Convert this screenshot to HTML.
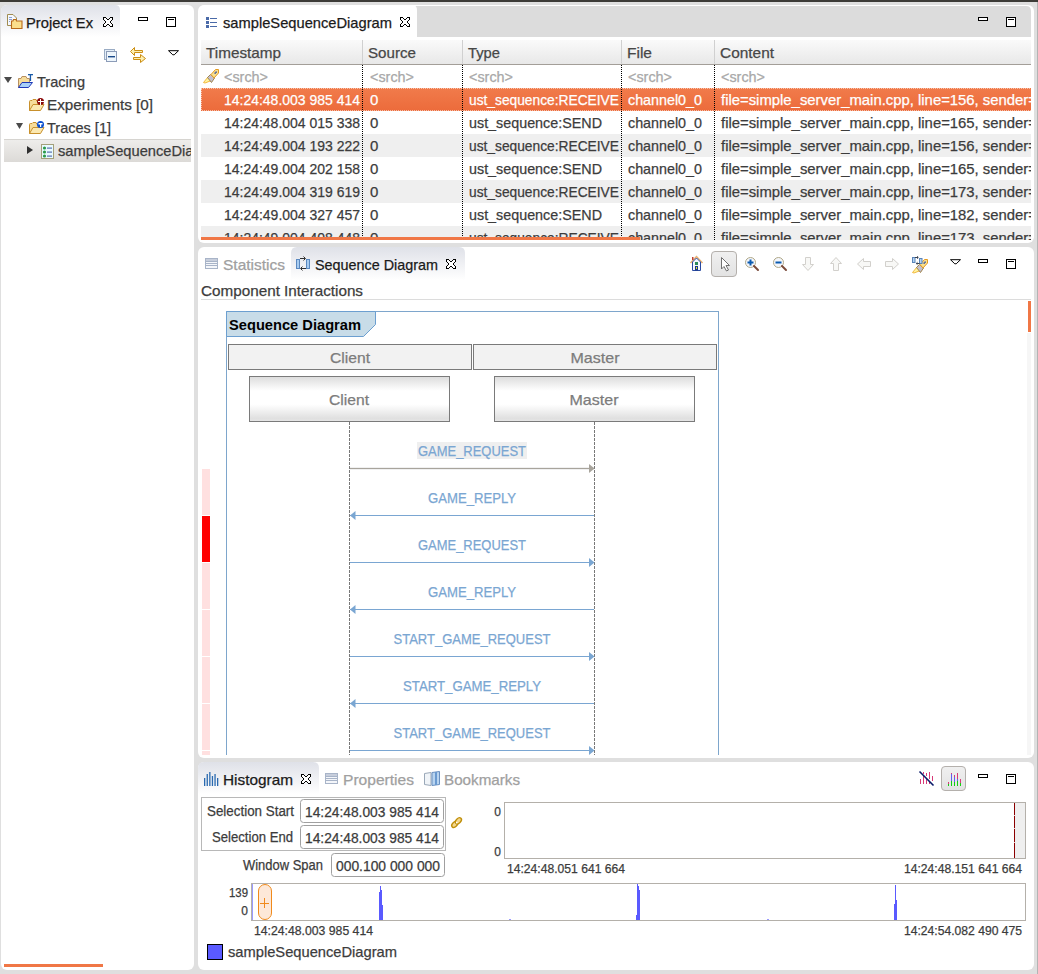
<!DOCTYPE html><html><head><meta charset="utf-8"><style>html,body{margin:0;padding:0;background:#dfdfdf;overflow:hidden}svg{display:block}</style></head><body><svg width="1038" height="974" viewBox="0 0 1038 974" style="font-family:'Liberation Sans',sans-serif"><defs><linearGradient id="tabg" x1="0" y1="0" x2="0" y2="1"><stop offset="0" stop-color="#dfe1e8"/><stop offset="1" stop-color="#ffffff"/></linearGradient><linearGradient id="hdrg" x1="0" y1="0" x2="0" y2="1"><stop offset="0" stop-color="#fafafa"/><stop offset="1" stop-color="#e8e8e8"/></linearGradient><linearGradient id="boxg" x1="0" y1="0" x2="0" y2="1"><stop offset="0" stop-color="#dcdcdc"/><stop offset="0.32" stop-color="#ffffff"/><stop offset="0.62" stop-color="#ffffff"/><stop offset="0.93" stop-color="#e0e0e0"/><stop offset="1" stop-color="#e6e6e6"/></linearGradient><linearGradient id="btng" x1="0" y1="0" x2="0" y2="1"><stop offset="0" stop-color="#f0f0f0"/><stop offset="1" stop-color="#e2e2e2"/></linearGradient><linearGradient id="orow" x1="0" y1="0" x2="0" y2="1"><stop offset="0" stop-color="#f17b4b"/><stop offset="1" stop-color="#ec6b3b"/></linearGradient><linearGradient id="selrow" x1="0" y1="0" x2="0" y2="1"><stop offset="0" stop-color="#efeeec"/><stop offset="1" stop-color="#dcdad7"/></linearGradient></defs><rect x="0" y="0" width="1038" height="974" fill="#dfdfdf" />
<rect x="0" y="0" width="1038" height="2" fill="#3c3b37" />
<rect x="1037" y="2" width="1" height="972" fill="#b4b4b4" />
<rect x="1" y="5" width="193" height="965" rx="6" ry="6" fill="#ffffff"/>
<rect x="198" y="5" width="836" height="238" rx="6" ry="6" fill="#ffffff"/>
<rect x="198" y="247" width="836" height="511" rx="6" ry="6" fill="#ffffff"/>
<rect x="198" y="762" width="836" height="208" rx="6" ry="6" fill="#ffffff"/>
<path d="M1,37 L1,11 Q1,5 7,5 L115,5 Q120,5 120,10 L120,37 Z" fill="url(#tabg)"/>
<text x="26" y="28" font-size="15" fill="#1a1a1a" font-family="Liberation Sans" textLength="67" lengthAdjust="spacingAndGlyphs" stroke="#1a1a1a" stroke-width="0.25" >Project Ex</text>
<text x="37" y="87" font-size="15" fill="#3c3c3c" font-family="Liberation Sans" textLength="48" lengthAdjust="spacingAndGlyphs" stroke="#3c3c3c" stroke-width="0.25" >Tracing</text>
<text x="47" y="110" font-size="15" fill="#3c3c3c" font-family="Liberation Sans" textLength="106" lengthAdjust="spacingAndGlyphs" stroke="#3c3c3c" stroke-width="0.25" >Experiments [0]</text>
<text x="47" y="133" font-size="15" fill="#3c3c3c" font-family="Liberation Sans" textLength="64" lengthAdjust="spacingAndGlyphs" stroke="#3c3c3c" stroke-width="0.25" >Traces [1]</text>
<rect x="4" y="139" width="187" height="23" fill="url(#selrow)"/>
<rect x="4" y="139" width="187" height="1" fill="#d6d4d0" />
<svg x="0" y="0" width="191" height="974" overflow="hidden">
<text x="58" y="156" font-size="15" fill="#3c3c3c" font-family="Liberation Sans" textLength="169" lengthAdjust="spacingAndGlyphs" stroke="#3c3c3c" stroke-width="0.25" >sampleSequenceDiagram</text>
</svg>
<rect x="4" y="964" width="99" height="3" fill="#f07746" />
<path d="M411,37 L411,6 L1026,6 Q1031,6 1031,11 L1031,37 Z" fill="#dcdcdc"/>
<path d="M199,37 L199,11 Q199,5 205,5 L412,5 Q417,5 417,10 L417,37 Z" fill="#ffffff"/>
<text x="223" y="28" font-size="15" fill="#1a1a1a" font-family="Liberation Sans" textLength="169" lengthAdjust="spacingAndGlyphs" stroke="#1a1a1a" stroke-width="0.25" >sampleSequenceDiagram</text>
<rect x="201" y="40" width="830" height="24" fill="url(#hdrg)"/>
<rect x="201" y="64" width="830" height="1" fill="#a39e98" />
<rect x="362" y="40" width="1" height="24" fill="#d0d0d0" />
<rect x="462" y="40" width="1" height="24" fill="#d0d0d0" />
<rect x="621" y="40" width="1" height="24" fill="#d0d0d0" />
<rect x="714" y="40" width="1" height="24" fill="#d0d0d0" />
<text x="206" y="58" font-size="15" fill="#474747" font-family="Liberation Sans" textLength="75" lengthAdjust="spacingAndGlyphs" stroke="#474747" stroke-width="0.25" >Timestamp</text>
<text x="368" y="58" font-size="15" fill="#474747" font-family="Liberation Sans" textLength="48" lengthAdjust="spacingAndGlyphs" stroke="#474747" stroke-width="0.25" >Source</text>
<text x="468" y="58" font-size="15" fill="#474747" font-family="Liberation Sans" textLength="32" lengthAdjust="spacingAndGlyphs" stroke="#474747" stroke-width="0.25" >Type</text>
<text x="627" y="58" font-size="15" fill="#474747" font-family="Liberation Sans" textLength="25" lengthAdjust="spacingAndGlyphs" stroke="#474747" stroke-width="0.25" >File</text>
<text x="720" y="58" font-size="15" fill="#474747" font-family="Liberation Sans" textLength="54" lengthAdjust="spacingAndGlyphs" stroke="#474747" stroke-width="0.25" >Content</text>
<text x="224" y="82" font-size="15" fill="#a8a8a8" font-family="Liberation Sans" textLength="44" lengthAdjust="spacingAndGlyphs" stroke="#a8a8a8" stroke-width="0.25" >&lt;srch&gt;</text>
<text x="370" y="82" font-size="15" fill="#a8a8a8" font-family="Liberation Sans" textLength="44" lengthAdjust="spacingAndGlyphs" stroke="#a8a8a8" stroke-width="0.25" >&lt;srch&gt;</text>
<text x="469" y="82" font-size="15" fill="#a8a8a8" font-family="Liberation Sans" textLength="44" lengthAdjust="spacingAndGlyphs" stroke="#a8a8a8" stroke-width="0.25" >&lt;srch&gt;</text>
<text x="628" y="82" font-size="15" fill="#a8a8a8" font-family="Liberation Sans" textLength="44" lengthAdjust="spacingAndGlyphs" stroke="#a8a8a8" stroke-width="0.25" >&lt;srch&gt;</text>
<text x="721" y="82" font-size="15" fill="#a8a8a8" font-family="Liberation Sans" textLength="44" lengthAdjust="spacingAndGlyphs" stroke="#a8a8a8" stroke-width="0.25" >&lt;srch&gt;</text>
<svg x="0" y="0" width="1031" height="240" overflow="hidden">
<rect x="201" y="88" width="830" height="23" fill="url(#orow)"/>
<line x1="201" y1="88.5" x2="1031" y2="88.5" stroke="#ffffff" stroke-opacity="0.55" stroke-dasharray="1,1"/>
<line x1="202" y1="110.5" x2="1031" y2="110.5" stroke="#ffffff" stroke-opacity="0.55" stroke-dasharray="1,1"/>
<line x1="201.5" y1="89" x2="201.5" y2="111" stroke="#ffffff" stroke-opacity="0.55" stroke-dasharray="1,1"/>
<text x="224" y="105" font-size="15" fill="#ffffff" font-family="Liberation Sans" textLength="136" lengthAdjust="spacingAndGlyphs" stroke="#ffffff" stroke-width="0.25" >14:24:48.003 985 414</text>
<text x="370" y="105" font-size="15" fill="#ffffff" font-family="Liberation Sans" stroke="#ffffff" stroke-width="0.25" >0</text>
<svg x="0" y="0" width="620" height="974" overflow="hidden">
<text x="469" y="105" font-size="15" fill="#ffffff" font-family="Liberation Sans" textLength="150" lengthAdjust="spacingAndGlyphs" stroke="#ffffff" stroke-width="0.25" >ust_sequence:RECEIVE</text>
</svg>
<text x="628" y="105" font-size="15" fill="#ffffff" font-family="Liberation Sans" textLength="74" lengthAdjust="spacingAndGlyphs" stroke="#ffffff" stroke-width="0.25" >channel0_0</text>
<text x="721" y="105" font-size="15" fill="#ffffff" font-family="Liberation Sans" textLength="316" lengthAdjust="spacingAndGlyphs" stroke="#ffffff" stroke-width="0.25" >file=simple_server_main.cpp, line=156, sender=</text>
<text x="224" y="128" font-size="15" fill="#3c3c3c" font-family="Liberation Sans" textLength="136" lengthAdjust="spacingAndGlyphs" stroke="#3c3c3c" stroke-width="0.25" >14:24:48.004 015 338</text>
<text x="370" y="128" font-size="15" fill="#3c3c3c" font-family="Liberation Sans" stroke="#3c3c3c" stroke-width="0.25" >0</text>
<svg x="0" y="0" width="620" height="974" overflow="hidden">
<text x="469" y="128" font-size="15" fill="#3c3c3c" font-family="Liberation Sans" textLength="133" lengthAdjust="spacingAndGlyphs" stroke="#3c3c3c" stroke-width="0.25" >ust_sequence:SEND</text>
</svg>
<text x="628" y="128" font-size="15" fill="#3c3c3c" font-family="Liberation Sans" textLength="74" lengthAdjust="spacingAndGlyphs" stroke="#3c3c3c" stroke-width="0.25" >channel0_0</text>
<text x="721" y="128" font-size="15" fill="#3c3c3c" font-family="Liberation Sans" textLength="316" lengthAdjust="spacingAndGlyphs" stroke="#3c3c3c" stroke-width="0.25" >file=simple_server_main.cpp, line=165, sender=</text>
<rect x="201" y="134" width="830" height="23" fill="#efefef" />
<text x="224" y="151" font-size="15" fill="#3c3c3c" font-family="Liberation Sans" textLength="136" lengthAdjust="spacingAndGlyphs" stroke="#3c3c3c" stroke-width="0.25" >14:24:49.004 193 222</text>
<text x="370" y="151" font-size="15" fill="#3c3c3c" font-family="Liberation Sans" stroke="#3c3c3c" stroke-width="0.25" >0</text>
<svg x="0" y="0" width="620" height="974" overflow="hidden">
<text x="469" y="151" font-size="15" fill="#3c3c3c" font-family="Liberation Sans" textLength="150" lengthAdjust="spacingAndGlyphs" stroke="#3c3c3c" stroke-width="0.25" >ust_sequence:RECEIVE</text>
</svg>
<text x="628" y="151" font-size="15" fill="#3c3c3c" font-family="Liberation Sans" textLength="74" lengthAdjust="spacingAndGlyphs" stroke="#3c3c3c" stroke-width="0.25" >channel0_0</text>
<text x="721" y="151" font-size="15" fill="#3c3c3c" font-family="Liberation Sans" textLength="316" lengthAdjust="spacingAndGlyphs" stroke="#3c3c3c" stroke-width="0.25" >file=simple_server_main.cpp, line=156, sender=</text>
<text x="224" y="174" font-size="15" fill="#3c3c3c" font-family="Liberation Sans" textLength="136" lengthAdjust="spacingAndGlyphs" stroke="#3c3c3c" stroke-width="0.25" >14:24:49.004 202 158</text>
<text x="370" y="174" font-size="15" fill="#3c3c3c" font-family="Liberation Sans" stroke="#3c3c3c" stroke-width="0.25" >0</text>
<svg x="0" y="0" width="620" height="974" overflow="hidden">
<text x="469" y="174" font-size="15" fill="#3c3c3c" font-family="Liberation Sans" textLength="133" lengthAdjust="spacingAndGlyphs" stroke="#3c3c3c" stroke-width="0.25" >ust_sequence:SEND</text>
</svg>
<text x="628" y="174" font-size="15" fill="#3c3c3c" font-family="Liberation Sans" textLength="74" lengthAdjust="spacingAndGlyphs" stroke="#3c3c3c" stroke-width="0.25" >channel0_0</text>
<text x="721" y="174" font-size="15" fill="#3c3c3c" font-family="Liberation Sans" textLength="316" lengthAdjust="spacingAndGlyphs" stroke="#3c3c3c" stroke-width="0.25" >file=simple_server_main.cpp, line=165, sender=</text>
<rect x="201" y="180" width="830" height="23" fill="#efefef" />
<text x="224" y="197" font-size="15" fill="#3c3c3c" font-family="Liberation Sans" textLength="136" lengthAdjust="spacingAndGlyphs" stroke="#3c3c3c" stroke-width="0.25" >14:24:49.004 319 619</text>
<text x="370" y="197" font-size="15" fill="#3c3c3c" font-family="Liberation Sans" stroke="#3c3c3c" stroke-width="0.25" >0</text>
<svg x="0" y="0" width="620" height="974" overflow="hidden">
<text x="469" y="197" font-size="15" fill="#3c3c3c" font-family="Liberation Sans" textLength="150" lengthAdjust="spacingAndGlyphs" stroke="#3c3c3c" stroke-width="0.25" >ust_sequence:RECEIVE</text>
</svg>
<text x="628" y="197" font-size="15" fill="#3c3c3c" font-family="Liberation Sans" textLength="74" lengthAdjust="spacingAndGlyphs" stroke="#3c3c3c" stroke-width="0.25" >channel0_0</text>
<text x="721" y="197" font-size="15" fill="#3c3c3c" font-family="Liberation Sans" textLength="316" lengthAdjust="spacingAndGlyphs" stroke="#3c3c3c" stroke-width="0.25" >file=simple_server_main.cpp, line=173, sender=</text>
<text x="224" y="220" font-size="15" fill="#3c3c3c" font-family="Liberation Sans" textLength="136" lengthAdjust="spacingAndGlyphs" stroke="#3c3c3c" stroke-width="0.25" >14:24:49.004 327 457</text>
<text x="370" y="220" font-size="15" fill="#3c3c3c" font-family="Liberation Sans" stroke="#3c3c3c" stroke-width="0.25" >0</text>
<svg x="0" y="0" width="620" height="974" overflow="hidden">
<text x="469" y="220" font-size="15" fill="#3c3c3c" font-family="Liberation Sans" textLength="133" lengthAdjust="spacingAndGlyphs" stroke="#3c3c3c" stroke-width="0.25" >ust_sequence:SEND</text>
</svg>
<text x="628" y="220" font-size="15" fill="#3c3c3c" font-family="Liberation Sans" textLength="74" lengthAdjust="spacingAndGlyphs" stroke="#3c3c3c" stroke-width="0.25" >channel0_0</text>
<text x="721" y="220" font-size="15" fill="#3c3c3c" font-family="Liberation Sans" textLength="316" lengthAdjust="spacingAndGlyphs" stroke="#3c3c3c" stroke-width="0.25" >file=simple_server_main.cpp, line=182, sender=</text>
<rect x="201" y="226" width="830" height="23" fill="#efefef" />
<text x="224" y="243" font-size="15" fill="#3c3c3c" font-family="Liberation Sans" textLength="136" lengthAdjust="spacingAndGlyphs" stroke="#3c3c3c" stroke-width="0.25" >14:24:49.004 408 448</text>
<text x="370" y="243" font-size="15" fill="#3c3c3c" font-family="Liberation Sans" stroke="#3c3c3c" stroke-width="0.25" >0</text>
<svg x="0" y="0" width="620" height="974" overflow="hidden">
<text x="469" y="243" font-size="15" fill="#3c3c3c" font-family="Liberation Sans" textLength="150" lengthAdjust="spacingAndGlyphs" stroke="#3c3c3c" stroke-width="0.25" >ust_sequence:RECEIVE</text>
</svg>
<text x="628" y="243" font-size="15" fill="#3c3c3c" font-family="Liberation Sans" textLength="74" lengthAdjust="spacingAndGlyphs" stroke="#3c3c3c" stroke-width="0.25" >channel0_0</text>
<text x="721" y="243" font-size="15" fill="#3c3c3c" font-family="Liberation Sans" textLength="316" lengthAdjust="spacingAndGlyphs" stroke="#3c3c3c" stroke-width="0.25" >file=simple_server_main.cpp, line=173, sender=</text>
</svg>
<line x1="362.5" y1="65" x2="362.5" y2="240" stroke="#000" stroke-width="1" stroke-dasharray="1,1"/>
<line x1="462.5" y1="65" x2="462.5" y2="240" stroke="#000" stroke-width="1" stroke-dasharray="1,1"/>
<line x1="621.5" y1="65" x2="621.5" y2="240" stroke="#000" stroke-width="1" stroke-dasharray="1,1"/>
<line x1="714.5" y1="65" x2="714.5" y2="240" stroke="#000" stroke-width="1" stroke-dasharray="1,1"/>
<rect x="201" y="237" width="439" height="3" fill="#f07746" />
<path d="M291,280 L291,253 Q291,247 297,247 L459,247 Q465,247 465,253 L465,280 Z" fill="url(#tabg)"/>
<text x="223" y="270" font-size="15" fill="#a0a0a0" font-family="Liberation Sans" textLength="62" lengthAdjust="spacingAndGlyphs" stroke="#a0a0a0" stroke-width="0.25" >Statistics</text>
<text x="315" y="270" font-size="15" fill="#1a1a1a" font-family="Liberation Sans" textLength="123" lengthAdjust="spacingAndGlyphs" stroke="#1a1a1a" stroke-width="0.25" >Sequence Diagram</text>
<text x="201" y="296" font-size="15" fill="#3c3c3c" font-family="Liberation Sans" textLength="162" lengthAdjust="spacingAndGlyphs" stroke="#3c3c3c" stroke-width="0.25" >Component Interactions</text>
<rect x="201" y="299" width="830" height="1" fill="#dcdcdc" />
<rect x="202" y="469" width="8" height="46" fill="#ffe0e0" />
<rect x="202" y="516" width="8" height="46" fill="#ff0000" />
<rect x="202" y="563" width="8" height="46" fill="#ffe0e0" />
<rect x="202" y="610" width="8" height="46" fill="#ffe0e0" />
<rect x="202" y="657" width="8" height="46" fill="#ffe0e0" />
<rect x="202" y="704" width="8" height="46" fill="#ffe0e0" />
<rect x="202" y="751" width="8" height="4" fill="#ffe0e0" />
<rect x="226" y="311" width="1" height="444" fill="#7ea6cc" />
<rect x="718" y="311" width="1" height="444" fill="#7ea6cc" />
<rect x="226" y="311" width="493" height="1" fill="#7ea6cc" />
<path d="M226.5,311.5 L375.5,311.5 L375.5,324.5 L363.5,336.5 L226.5,336.5 Z" fill="#c8dce8" stroke="#6c9fd0" stroke-width="1"/>
<text x="229" y="330" font-size="14" fill="#000000" font-family="Liberation Sans" textLength="132" lengthAdjust="spacingAndGlyphs" font-weight="bold" >Sequence Diagram</text>
<rect x="228.5" y="344.5" width="243" height="25" fill="#f2f2f2" stroke="#7a7a7a" stroke-width="1" rx="0" />
<rect x="473.5" y="344.5" width="243" height="25" fill="#f2f2f2" stroke="#7a7a7a" stroke-width="1" rx="0" />
<text x="350" y="363" font-size="15" fill="#7c7c7c" font-family="Liberation Sans" textLength="40" lengthAdjust="spacingAndGlyphs" text-anchor="middle" stroke="#7c7c7c" stroke-width="0.25" >Client</text>
<text x="595" y="363" font-size="15" fill="#7c7c7c" font-family="Liberation Sans" textLength="49" lengthAdjust="spacingAndGlyphs" text-anchor="middle" stroke="#7c7c7c" stroke-width="0.25" >Master</text>
<rect x="249.5" y="376.5" width="200" height="45" fill="url(#boxg)" stroke="#7a7a7a"/>
<rect x="494.5" y="376.5" width="200" height="45" fill="url(#boxg)" stroke="#7a7a7a"/>
<text x="349" y="405" font-size="15" fill="#7c7c7c" font-family="Liberation Sans" textLength="40" lengthAdjust="spacingAndGlyphs" text-anchor="middle" stroke="#7c7c7c" stroke-width="0.25" >Client</text>
<text x="594" y="405" font-size="15" fill="#7c7c7c" font-family="Liberation Sans" textLength="49" lengthAdjust="spacingAndGlyphs" text-anchor="middle" stroke="#7c7c7c" stroke-width="0.25" >Master</text>
<line x1="349.5" y1="422" x2="349.5" y2="755" stroke="#787878" stroke-dasharray="3,1"/>
<line x1="594.5" y1="422" x2="594.5" y2="755" stroke="#787878" stroke-dasharray="3,1"/>
<svg x="0" y="0" width="1038" height="755" overflow="hidden">
<rect x="417" y="442" width="110" height="17" fill="#efefef" />
<rect x="350" y="467" width="244" height="3" fill="#f0f0f0" />
<text x="472" y="456" font-size="15" fill="#7aa6d2" font-family="Liberation Sans" textLength="108" lengthAdjust="spacingAndGlyphs" text-anchor="middle" stroke="#7aa6d2" stroke-width="0.25" >GAME_REQUEST</text>
<rect x="350" y="468" width="244" height="1" fill="#a8a49c" />
<path d="M589,464 L594.5,468.5 L589,473 Z" fill="#a8a49c"/>
<text x="472" y="503" font-size="15" fill="#7aa6d2" font-family="Liberation Sans" textLength="88" lengthAdjust="spacingAndGlyphs" text-anchor="middle" stroke="#7aa6d2" stroke-width="0.25" >GAME_REPLY</text>
<rect x="350" y="515" width="244" height="1" fill="#7aa6d2" />
<path d="M355.5,511 L350,515.5 L355.5,520 Z" fill="#7aa6d2"/>
<text x="472" y="550" font-size="15" fill="#7aa6d2" font-family="Liberation Sans" textLength="108" lengthAdjust="spacingAndGlyphs" text-anchor="middle" stroke="#7aa6d2" stroke-width="0.25" >GAME_REQUEST</text>
<rect x="350" y="562" width="244" height="1" fill="#7aa6d2" />
<path d="M589,558 L594.5,562.5 L589,567 Z" fill="#7aa6d2"/>
<text x="472" y="597" font-size="15" fill="#7aa6d2" font-family="Liberation Sans" textLength="88" lengthAdjust="spacingAndGlyphs" text-anchor="middle" stroke="#7aa6d2" stroke-width="0.25" >GAME_REPLY</text>
<rect x="350" y="609" width="244" height="1" fill="#7aa6d2" />
<path d="M355.5,605 L350,609.5 L355.5,614 Z" fill="#7aa6d2"/>
<text x="472" y="644" font-size="15" fill="#7aa6d2" font-family="Liberation Sans" textLength="157" lengthAdjust="spacingAndGlyphs" text-anchor="middle" stroke="#7aa6d2" stroke-width="0.25" >START_GAME_REQUEST</text>
<rect x="350" y="656" width="244" height="1" fill="#7aa6d2" />
<path d="M589,652 L594.5,656.5 L589,661 Z" fill="#7aa6d2"/>
<text x="472" y="691" font-size="15" fill="#7aa6d2" font-family="Liberation Sans" textLength="138" lengthAdjust="spacingAndGlyphs" text-anchor="middle" stroke="#7aa6d2" stroke-width="0.25" >START_GAME_REPLY</text>
<rect x="350" y="703" width="244" height="1" fill="#7aa6d2" />
<path d="M355.5,699 L350,703.5 L355.5,708 Z" fill="#7aa6d2"/>
<text x="472" y="738" font-size="15" fill="#7aa6d2" font-family="Liberation Sans" textLength="157" lengthAdjust="spacingAndGlyphs" text-anchor="middle" stroke="#7aa6d2" stroke-width="0.25" >START_GAME_REQUEST</text>
<rect x="350" y="750" width="244" height="1" fill="#7aa6d2" />
<path d="M589,746 L594.5,750.5 L589,755 Z" fill="#7aa6d2"/>
</svg>
<rect x="1027" y="333" width="4" height="422" fill="#f6f6f6" />
<rect x="1028" y="301" width="3" height="31" fill="#f07746" />
<path d="M198,794 L198,768 Q198,762 204,762 L313,762 Q319,762 319,768 L319,794 Z" fill="url(#tabg)"/>
<text x="223" y="785" font-size="15" fill="#1a1a1a" font-family="Liberation Sans" textLength="70" lengthAdjust="spacingAndGlyphs" stroke="#1a1a1a" stroke-width="0.25" >Histogram</text>
<text x="343" y="785" font-size="15" fill="#a0a0a0" font-family="Liberation Sans" textLength="71" lengthAdjust="spacingAndGlyphs" stroke="#a0a0a0" stroke-width="0.25" >Properties</text>
<text x="444" y="785" font-size="15" fill="#a0a0a0" font-family="Liberation Sans" textLength="76" lengthAdjust="spacingAndGlyphs" stroke="#a0a0a0" stroke-width="0.25" >Bookmarks</text>
<rect x="201.5" y="797.5" width="244" height="53" fill="none" stroke="#b8b8b8" stroke-width="1" rx="0" />
<text x="207" y="816" font-size="14" fill="#3c3c3c" font-family="Liberation Sans" textLength="87" lengthAdjust="spacingAndGlyphs" stroke="#3c3c3c" stroke-width="0.25" >Selection Start</text>
<text x="212" y="842" font-size="14" fill="#3c3c3c" font-family="Liberation Sans" textLength="81" lengthAdjust="spacingAndGlyphs" stroke="#3c3c3c" stroke-width="0.25" >Selection End</text>
<text x="243" y="870" font-size="14" fill="#3c3c3c" font-family="Liberation Sans" textLength="80" lengthAdjust="spacingAndGlyphs" stroke="#3c3c3c" stroke-width="0.25" >Window Span</text>
<rect x="300.5" y="799.5" width="143" height="23" fill="#ffffff" stroke="#a0a0a0" stroke-width="1" rx="3" />
<rect x="300.5" y="825.5" width="143" height="23" fill="#ffffff" stroke="#a0a0a0" stroke-width="1" rx="3" />
<rect x="331.5" y="853.5" width="113" height="23" fill="#ffffff" stroke="#a0a0a0" stroke-width="1" rx="3" />
<text x="305" y="817" font-size="14" fill="#3c3c3c" font-family="Liberation Sans" textLength="134" lengthAdjust="spacingAndGlyphs" stroke="#3c3c3c" stroke-width="0.25" >14:24:48.003 985 414</text>
<text x="305" y="843" font-size="14" fill="#3c3c3c" font-family="Liberation Sans" textLength="134" lengthAdjust="spacingAndGlyphs" stroke="#3c3c3c" stroke-width="0.25" >14:24:48.003 985 414</text>
<text x="336" y="871" font-size="14" fill="#3c3c3c" font-family="Liberation Sans" textLength="104" lengthAdjust="spacingAndGlyphs" stroke="#3c3c3c" stroke-width="0.25" >000.100 000 000</text>
<rect x="504.5" y="802.5" width="521" height="56" fill="#ffffff" stroke="#b4b0aa" stroke-width="1" rx="0" />
<rect x="1015" y="803" width="10" height="55" fill="#efefef" />
<rect x="1014" y="803" width="1" height="55" fill="#8b0000" />
<rect x="1014" y="815" width="1" height="1" fill="#e8c8c8" />
<rect x="1014" y="828" width="1" height="1" fill="#e8c8c8" />
<rect x="1014" y="842" width="1" height="1" fill="#e8c8c8" />
<text x="501" y="816" font-size="12" fill="#3c3c3c" font-family="Liberation Sans" text-anchor="end" stroke="#3c3c3c" stroke-width="0.25" >0</text>
<text x="501" y="856" font-size="12" fill="#3c3c3c" font-family="Liberation Sans" text-anchor="end" stroke="#3c3c3c" stroke-width="0.25" >0</text>
<text x="507" y="873" font-size="12" fill="#3c3c3c" font-family="Liberation Sans" textLength="118" lengthAdjust="spacingAndGlyphs" stroke="#3c3c3c" stroke-width="0.25" >14:24:48.051 641 664</text>
<text x="904" y="873" font-size="12" fill="#3c3c3c" font-family="Liberation Sans" textLength="118" lengthAdjust="spacingAndGlyphs" stroke="#3c3c3c" stroke-width="0.25" >14:24:48.151 641 664</text>
<rect x="251.5" y="883.5" width="774" height="37" fill="#ffffff" stroke="#b4b0aa" stroke-width="1" rx="0" />
<rect x="252" y="884" width="1" height="36" fill="#9a9aff" />
<text x="248" y="897" font-size="12" fill="#3c3c3c" font-family="Liberation Sans" textLength="19" lengthAdjust="spacingAndGlyphs" text-anchor="end" stroke="#3c3c3c" stroke-width="0.25" >139</text>
<text x="248" y="915" font-size="12" fill="#3c3c3c" font-family="Liberation Sans" text-anchor="end" stroke="#3c3c3c" stroke-width="0.25" >0</text>
<rect x="258.5" y="884.5" width="13" height="35" rx="6.5" ry="6.5" fill="#fde8d8" stroke="#f08a1c"/>
<rect x="260" y="903" width="9" height="1" fill="#f08a1c" />
<rect x="264" y="898" width="1" height="10" fill="#f08a1c" />
<rect x="379" y="892" width="1" height="28" fill="#5a5aff" />
<rect x="380" y="886" width="1" height="34" fill="#5a5aff" />
<rect x="381" y="890" width="1" height="30" fill="#5a5aff" />
<rect x="382" y="905" width="1" height="15" fill="#5a5aff" />
<rect x="636" y="915" width="1" height="5" fill="#5a5aff" />
<rect x="637" y="884" width="1" height="36" fill="#5a5aff" />
<rect x="638" y="886" width="1" height="34" fill="#5a5aff" />
<rect x="639" y="890" width="1" height="30" fill="#5a5aff" />
<rect x="894" y="904" width="1" height="16" fill="#5a5aff" />
<rect x="895" y="885" width="1" height="35" fill="#5a5aff" />
<rect x="896" y="900" width="1" height="20" fill="#5a5aff" />
<rect x="509" y="919" width="2" height="1" fill="#9a9aff" />
<rect x="767" y="919" width="2" height="1" fill="#9a9aff" />
<text x="254" y="935" font-size="12" fill="#3c3c3c" font-family="Liberation Sans" textLength="119" lengthAdjust="spacingAndGlyphs" stroke="#3c3c3c" stroke-width="0.25" >14:24:48.003 985 414</text>
<text x="904" y="935" font-size="12" fill="#3c3c3c" font-family="Liberation Sans" textLength="118" lengthAdjust="spacingAndGlyphs" stroke="#3c3c3c" stroke-width="0.25" >14:24:54.082 490 475</text>
<rect x="207.5" y="944.5" width="15" height="15" fill="#5a5aff" stroke="#000000" stroke-width="1" rx="0" />
<text x="228" y="957" font-size="15" fill="#3c3c3c" font-family="Liberation Sans" textLength="169" lengthAdjust="spacingAndGlyphs" stroke="#3c3c3c" stroke-width="0.25" >sampleSequenceDiagram</text>
<path d="M7.5,14.5 L13,14.5 L16.5,18 L16.5,25.5 L7.5,25.5 Z" fill="#f4f8ff" stroke="#a08c50"/>
<rect x="9" y="17" width="3" height="1" fill="#8ca0d0"/><rect x="9" y="19" width="3" height="1" fill="#8ca0d0"/><rect x="9" y="21" width="1" height="1" fill="#8ca0d0"/>
<path d="M11.5,28.5 L11.5,21 L13,21 L13.5,19.5 L16,19.5 L16.5,21 L22,21 L22,28.5 Z" fill="#fbdf8c" stroke="#b86a1a" stroke-width="1.1"/>
<rect x="103" y="17" width="3" height="1" fill="#000000"/>
<rect x="110" y="17" width="3" height="1" fill="#000000"/>
<rect x="103" y="18" width="1" height="1" fill="#000000"/>
<rect x="104" y="18" width="2" height="1" fill="#ffffff"/>
<rect x="106" y="18" width="1" height="1" fill="#000000"/>
<rect x="109" y="18" width="1" height="1" fill="#000000"/>
<rect x="110" y="18" width="2" height="1" fill="#ffffff"/>
<rect x="112" y="18" width="1" height="1" fill="#000000"/>
<rect x="103" y="19" width="1" height="1" fill="#000000"/>
<rect x="104" y="19" width="3" height="1" fill="#ffffff"/>
<rect x="107" y="19" width="2" height="1" fill="#000000"/>
<rect x="109" y="19" width="3" height="1" fill="#ffffff"/>
<rect x="112" y="19" width="1" height="1" fill="#000000"/>
<rect x="104" y="20" width="1" height="1" fill="#000000"/>
<rect x="105" y="20" width="6" height="1" fill="#ffffff"/>
<rect x="111" y="20" width="1" height="1" fill="#000000"/>
<rect x="105" y="21" width="1" height="1" fill="#000000"/>
<rect x="106" y="21" width="4" height="1" fill="#ffffff"/>
<rect x="110" y="21" width="1" height="1" fill="#000000"/>
<rect x="105" y="22" width="1" height="1" fill="#000000"/>
<rect x="106" y="22" width="4" height="1" fill="#ffffff"/>
<rect x="110" y="22" width="1" height="1" fill="#000000"/>
<rect x="104" y="23" width="1" height="1" fill="#000000"/>
<rect x="105" y="23" width="6" height="1" fill="#ffffff"/>
<rect x="111" y="23" width="1" height="1" fill="#000000"/>
<rect x="103" y="24" width="1" height="1" fill="#000000"/>
<rect x="104" y="24" width="3" height="1" fill="#ffffff"/>
<rect x="107" y="24" width="2" height="1" fill="#000000"/>
<rect x="109" y="24" width="3" height="1" fill="#ffffff"/>
<rect x="112" y="24" width="1" height="1" fill="#000000"/>
<rect x="103" y="25" width="1" height="1" fill="#000000"/>
<rect x="104" y="25" width="2" height="1" fill="#ffffff"/>
<rect x="106" y="25" width="1" height="1" fill="#000000"/>
<rect x="109" y="25" width="1" height="1" fill="#000000"/>
<rect x="110" y="25" width="2" height="1" fill="#ffffff"/>
<rect x="112" y="25" width="1" height="1" fill="#000000"/>
<rect x="103" y="26" width="3" height="1" fill="#000000"/>
<rect x="110" y="26" width="3" height="1" fill="#000000"/>
<rect x="138.5" y="17.5" width="9" height="3" fill="#fff" stroke="#000" stroke-width="1"/>
<rect x="166.5" y="17.5" width="9" height="9" fill="#fff" stroke="#000" stroke-width="1"/>
<rect x="168" y="19" width="6" height="1" fill="#000"/>
<rect x="104.5" y="49.5" width="10" height="10" fill="#e4eef8" stroke="#9aacc4"/>
<rect x="106.5" y="51.5" width="10" height="10" fill="#eef6fc" stroke="#8c9cb8"/>
<rect x="108" y="56" width="7" height="1.4" fill="#1a4a8a"/>
<path d="M130.5,51.5 L134.5,47.5 L134.5,50.5 L142.5,50.5 L142.5,52.5 L134.5,52.5 L134.5,55.5 Z" fill="#fcefb0" stroke="#cc8e14" stroke-width="1"/>
<path d="M145.5,58.5 L140.5,54.5 L140.5,57.5 L133.5,57.5 L133.5,59.5 L140.5,59.5 L140.5,62.5 Z" fill="#fcefb0" stroke="#cc8e14" stroke-width="1"/>
<path d="M168.5,50.7 L178.5,50.7 L174.2,54.8 L172.8,54.8 Z" fill="#fff" stroke="#000" stroke-width="1" stroke-linejoin="round"/>
<path d="M4,77 L12,77 L8.0,83 Z" fill="#4a4a4a"/>
<path d="M18.5,87.5 L18.5,78.5 L21,78.5 L22,76.5 L26,76.5 L27,78.5 L29.5,78.5 L29.5,82 Z" fill="#f6dc9a" stroke="#b89060"/>
<path d="M18.5,87.5 L22,82.5 L32.5,82.5 L28.5,87.5 Z" fill="#a8d0f8" stroke="#2038b8"/>
<rect x="28" y="74" width="5" height="1.3" fill="#1a5aa8"/><rect x="29.8" y="74" width="1.3" height="7" fill="#1a5aa8"/>
<path d="M29.5,110.5 L29.5,101.5 Q29.5,100.5 30.5,100.5 L32,100.5 L33,99.5 L36,99.5 L37,101.5 L40.5,101.5 L40.5,104.5 Z" fill="#f6dc9a" stroke="#c8902c"/>
<path d="M29.5,110.5 L33,104.5 L44,104.5 L40.5,110.5 Z" fill="#fbe8b0" stroke="#c8902c"/>
<circle cx="40.5" cy="101.5" r="3.5" fill="#8b0a0a"/>
<rect x="40" y="99" width="1" height="6" fill="#fff"/><rect x="38" y="101" width="6" height="1" fill="#fff"/>
<path d="M16,123 L23,123 L19.5,129 Z" fill="#4a4a4a"/>
<path d="M29.5,133.5 L29.5,124.5 Q29.5,123.5 30.5,123.5 L32,123.5 L33,122.5 L36,122.5 L37,124.5 L40.5,124.5 L40.5,127.5 Z" fill="#f6dc9a" stroke="#c8902c"/>
<path d="M29.5,133.5 L33,127.5 L44,127.5 L40.5,133.5 Z" fill="#fbe8b0" stroke="#c8902c"/>
<circle cx="40.5" cy="124.5" r="3.5" fill="#0a4fd0"/>
<rect x="38.5" y="123" width="4" height="1.5" fill="#fff"/><rect x="40" y="123" width="1.2" height="4" fill="#fff"/>
<path d="M27,146 L33,150.0 L27,154 Z" fill="#303030"/>
<rect x="41.5" y="144.5" width="12" height="14" fill="#e8faff" stroke="#a4a07a"/>
<circle cx="44.5" cy="148" r="1.6" fill="#2a9a4a"/>
<rect x="47" y="147.5" width="5" height="1.2" fill="#5a70b0"/>
<circle cx="44.5" cy="152" r="1.6" fill="#2a9a4a"/>
<rect x="47" y="151.5" width="5" height="1.2" fill="#5a70b0"/>
<circle cx="44.5" cy="156" r="1.6" fill="#2a9a4a"/>
<rect x="47" y="155.5" width="5" height="1.2" fill="#5a70b0"/>
<rect x="206" y="17" width="3" height="3" fill="#4a6aa8"/>
<rect x="210" y="18" width="7" height="1" fill="#4a6aa8"/>
<rect x="206" y="21" width="3" height="3" fill="#4a6aa8"/>
<rect x="210" y="22" width="7" height="1" fill="#4a6aa8"/>
<rect x="206" y="25" width="3" height="3" fill="#4a6aa8"/>
<rect x="210" y="26" width="7" height="1" fill="#4a6aa8"/>
<rect x="400" y="17" width="3" height="1" fill="#000000"/>
<rect x="407" y="17" width="3" height="1" fill="#000000"/>
<rect x="400" y="18" width="1" height="1" fill="#000000"/>
<rect x="401" y="18" width="2" height="1" fill="#ffffff"/>
<rect x="403" y="18" width="1" height="1" fill="#000000"/>
<rect x="406" y="18" width="1" height="1" fill="#000000"/>
<rect x="407" y="18" width="2" height="1" fill="#ffffff"/>
<rect x="409" y="18" width="1" height="1" fill="#000000"/>
<rect x="400" y="19" width="1" height="1" fill="#000000"/>
<rect x="401" y="19" width="3" height="1" fill="#ffffff"/>
<rect x="404" y="19" width="2" height="1" fill="#000000"/>
<rect x="406" y="19" width="3" height="1" fill="#ffffff"/>
<rect x="409" y="19" width="1" height="1" fill="#000000"/>
<rect x="401" y="20" width="1" height="1" fill="#000000"/>
<rect x="402" y="20" width="6" height="1" fill="#ffffff"/>
<rect x="408" y="20" width="1" height="1" fill="#000000"/>
<rect x="402" y="21" width="1" height="1" fill="#000000"/>
<rect x="403" y="21" width="4" height="1" fill="#ffffff"/>
<rect x="407" y="21" width="1" height="1" fill="#000000"/>
<rect x="402" y="22" width="1" height="1" fill="#000000"/>
<rect x="403" y="22" width="4" height="1" fill="#ffffff"/>
<rect x="407" y="22" width="1" height="1" fill="#000000"/>
<rect x="401" y="23" width="1" height="1" fill="#000000"/>
<rect x="402" y="23" width="6" height="1" fill="#ffffff"/>
<rect x="408" y="23" width="1" height="1" fill="#000000"/>
<rect x="400" y="24" width="1" height="1" fill="#000000"/>
<rect x="401" y="24" width="3" height="1" fill="#ffffff"/>
<rect x="404" y="24" width="2" height="1" fill="#000000"/>
<rect x="406" y="24" width="3" height="1" fill="#ffffff"/>
<rect x="409" y="24" width="1" height="1" fill="#000000"/>
<rect x="400" y="25" width="1" height="1" fill="#000000"/>
<rect x="401" y="25" width="2" height="1" fill="#ffffff"/>
<rect x="403" y="25" width="1" height="1" fill="#000000"/>
<rect x="406" y="25" width="1" height="1" fill="#000000"/>
<rect x="407" y="25" width="2" height="1" fill="#ffffff"/>
<rect x="409" y="25" width="1" height="1" fill="#000000"/>
<rect x="400" y="26" width="3" height="1" fill="#000000"/>
<rect x="407" y="26" width="3" height="1" fill="#000000"/>
<rect x="978.5" y="17.5" width="9" height="3" fill="#fff" stroke="#000" stroke-width="1"/>
<rect x="1006.5" y="17.5" width="9" height="9" fill="#fff" stroke="#000" stroke-width="1"/>
<rect x="1008" y="19" width="6" height="1" fill="#000"/>
<path d="M203.5,82.5 L208,77 L211.5,80.5 L205,83 Z" fill="#fff4a0" stroke="#f0b030" stroke-width="0.9"/>
<path d="M207.5,77.5 L210.5,74.5 L214.5,78 L211.5,82.5 Z" fill="#c4c0cc" stroke="#9a7a40" stroke-width="0.9"/>
<path d="M211,74.5 L215.5,69.5 L218.5,69.5 L218.5,73 L214,78 Z" fill="#f8e090" stroke="#e49a20" stroke-width="1"/>
<rect x="214.5" y="72.5" width="1.3" height="1.3" fill="#1a3a9a"/><rect x="215.5" y="71.5" width="1.3" height="1.3" fill="#1a3a9a"/>
<rect x="205.5" y="258.5" width="12" height="10" fill="#f4f6fa" stroke="#a8b4c8"/>
<rect x="206" y="261" width="11" height="1" fill="#a8b4c8"/>
<rect x="206" y="263" width="11" height="1" fill="#a8b4c8"/>
<rect x="206" y="265" width="11" height="1" fill="#a8b4c8"/>
<rect x="206" y="259" width="11" height="2" fill="#a8b4c8" opacity="0.6"/>
<rect x="296.5" y="259.5" width="3" height="9" fill="#a8ccf0" stroke="#5a88c0"/>
<rect x="306.5" y="259.5" width="3" height="9" fill="#a8ccf0" stroke="#5a88c0"/>
<path d="M300,258.5 L305,258.5 M303.5,256.5 L305.5,258.5 L303.5,260.5" fill="none" stroke="#303030" stroke-width="1"/>
<path d="M301,268.5 L306,268.5 M302.5,266.5 L300.5,268.5 L302.5,270.5" fill="none" stroke="#303030" stroke-width="1"/>
<rect x="446" y="259" width="3" height="1" fill="#000000"/>
<rect x="453" y="259" width="3" height="1" fill="#000000"/>
<rect x="446" y="260" width="1" height="1" fill="#000000"/>
<rect x="447" y="260" width="2" height="1" fill="#ffffff"/>
<rect x="449" y="260" width="1" height="1" fill="#000000"/>
<rect x="452" y="260" width="1" height="1" fill="#000000"/>
<rect x="453" y="260" width="2" height="1" fill="#ffffff"/>
<rect x="455" y="260" width="1" height="1" fill="#000000"/>
<rect x="446" y="261" width="1" height="1" fill="#000000"/>
<rect x="447" y="261" width="3" height="1" fill="#ffffff"/>
<rect x="450" y="261" width="2" height="1" fill="#000000"/>
<rect x="452" y="261" width="3" height="1" fill="#ffffff"/>
<rect x="455" y="261" width="1" height="1" fill="#000000"/>
<rect x="447" y="262" width="1" height="1" fill="#000000"/>
<rect x="448" y="262" width="6" height="1" fill="#ffffff"/>
<rect x="454" y="262" width="1" height="1" fill="#000000"/>
<rect x="448" y="263" width="1" height="1" fill="#000000"/>
<rect x="449" y="263" width="4" height="1" fill="#ffffff"/>
<rect x="453" y="263" width="1" height="1" fill="#000000"/>
<rect x="448" y="264" width="1" height="1" fill="#000000"/>
<rect x="449" y="264" width="4" height="1" fill="#ffffff"/>
<rect x="453" y="264" width="1" height="1" fill="#000000"/>
<rect x="447" y="265" width="1" height="1" fill="#000000"/>
<rect x="448" y="265" width="6" height="1" fill="#ffffff"/>
<rect x="454" y="265" width="1" height="1" fill="#000000"/>
<rect x="446" y="266" width="1" height="1" fill="#000000"/>
<rect x="447" y="266" width="3" height="1" fill="#ffffff"/>
<rect x="450" y="266" width="2" height="1" fill="#000000"/>
<rect x="452" y="266" width="3" height="1" fill="#ffffff"/>
<rect x="455" y="266" width="1" height="1" fill="#000000"/>
<rect x="446" y="267" width="1" height="1" fill="#000000"/>
<rect x="447" y="267" width="2" height="1" fill="#ffffff"/>
<rect x="449" y="267" width="1" height="1" fill="#000000"/>
<rect x="452" y="267" width="1" height="1" fill="#000000"/>
<rect x="453" y="267" width="2" height="1" fill="#ffffff"/>
<rect x="455" y="267" width="1" height="1" fill="#000000"/>
<rect x="446" y="268" width="3" height="1" fill="#000000"/>
<rect x="453" y="268" width="3" height="1" fill="#000000"/>
<path d="M690.5,263 L696.5,256.5 L702.5,263" fill="none" stroke="#e8b070" stroke-width="1.5"/>
<rect x="692" y="257" width="1.5" height="3" fill="#c04030"/>
<path d="M692.5,262 L696.5,258 L700.5,262 L700.5,270.5 L692.5,270.5 Z" fill="#f4f8ff" stroke="#2a4aa0"/>
<rect x="695" y="262" width="3" height="3" fill="#2a8a5a"/>
<rect x="695" y="266" width="3" height="4.5" fill="#1a3a8a"/><rect x="696" y="267" width="1" height="2" fill="#e0e020"/>
<rect x="711.5" y="251.5" width="25" height="25" rx="3.5" fill="url(#btng)" stroke="#b4b0ac"/>
<path d="M721.5,257.5 L729.5,265.5 L726,265.5 L728.5,270 L726.5,271 L724,266.5 L721.5,269 Z" fill="#ffffff" stroke="#707070"/>
<circle cx="750.5" cy="262.5" r="5" fill="#f4f6fa" stroke="#b0a888" stroke-width="1"/>
<path d="M754,266 L758,270" stroke="#7a4a3a" stroke-width="2" stroke-linecap="round"/>
<rect x="747.5" y="261.5" width="6" height="2" fill="#0a5ab0"/>
<rect x="749.5" y="259.5" width="2" height="6" fill="#0a5ab0"/>
<circle cx="778.5" cy="262.5" r="5" fill="#f4f6fa" stroke="#b0a888" stroke-width="1"/>
<path d="M782,266 L786,270" stroke="#7a4a3a" stroke-width="2" stroke-linecap="round"/>
<rect x="775.5" y="261.5" width="6" height="2" fill="#0a5ab0"/>
<path d="M805.5,257.5 L810.5,257.5 L810.5,264.5 L813.5,264.5 L808,270.5 L802.5,264.5 L805.5,264.5 Z" fill="#f8f8f6" stroke="#d2d0cc" stroke-width="1"/>
<path d="M833.5,270.5 L838.5,270.5 L838.5,263.5 L841.5,263.5 L836,257.5 L830.5,263.5 L833.5,263.5 Z" fill="#f8f8f6" stroke="#d2d0cc" stroke-width="1"/>
<path d="M870.5,261.5 L870.5,266.5 L863.5,266.5 L863.5,269.5 L857.5,264 L863.5,258.5 L863.5,261.5 Z" fill="#f8f8f6" stroke="#d2d0cc" stroke-width="1"/>
<path d="M885.5,261.5 L885.5,266.5 L892.5,266.5 L892.5,269.5 L898.5,264 L892.5,258.5 L892.5,261.5 Z" fill="#f8f8f6" stroke="#d2d0cc" stroke-width="1"/>
<path d="M912.5,272.5 L917,267 L920.5,270.5 L914,273 Z" fill="#fff4a0" stroke="#f0b030" stroke-width="0.9"/>
<path d="M916.5,267.5 L919.5,264.5 L923.5,268 L920.5,272.5 Z" fill="#c4c0cc" stroke="#9a7a40" stroke-width="0.9"/>
<path d="M920,264.5 L924.5,259.5 L927.5,259.5 L927.5,263 L923,268 Z" fill="#f8e090" stroke="#e49a20" stroke-width="1"/>
<rect x="923.5" y="262.5" width="1.3" height="1.3" fill="#1a3a9a"/><rect x="924.5" y="261.5" width="1.3" height="1.3" fill="#1a3a9a"/>
<rect x="912.5" y="257.5" width="2.5" height="5" fill="#b4d4f4" stroke="#5a84b8"/>
<rect x="919.5" y="258.5" width="2.5" height="5" fill="#b4d4f4" stroke="#5a84b8"/>
<path d="M915,257.5 L918,257.5 M917,256.3 L918.3,257.5 L917,258.7" fill="none" stroke="#3a4250" stroke-width="1"/>
<path d="M916.5,263.5 L919.5,263.5 M917.5,262.3 L916.2,263.5 L917.5,264.7" fill="none" stroke="#3a4250" stroke-width="1"/>
<path d="M950.5,259.7 L960.5,259.7 L956.2,263.8 L954.8,263.8 Z" fill="#fff" stroke="#000" stroke-width="1" stroke-linejoin="round"/>
<rect x="978.5" y="259.5" width="9" height="3" fill="#fff" stroke="#000" stroke-width="1"/>
<rect x="1006.5" y="259.5" width="9" height="9" fill="#fff" stroke="#000" stroke-width="1"/>
<rect x="1008" y="261" width="6" height="1" fill="#000"/>
<rect x="204.0" y="778" width="1.3" height="8" fill="#2a6ab0"/>
<rect x="206.6" y="774" width="1.3" height="12" fill="#2a6ab0"/>
<rect x="209.2" y="772" width="1.3" height="14" fill="#2a6ab0"/>
<rect x="211.8" y="776" width="1.3" height="10" fill="#2a6ab0"/>
<rect x="214.4" y="774" width="1.3" height="12" fill="#2a6ab0"/>
<rect x="217.0" y="778" width="1.3" height="8" fill="#2a6ab0"/>
<rect x="301" y="774" width="3" height="1" fill="#000000"/>
<rect x="308" y="774" width="3" height="1" fill="#000000"/>
<rect x="301" y="775" width="1" height="1" fill="#000000"/>
<rect x="302" y="775" width="2" height="1" fill="#ffffff"/>
<rect x="304" y="775" width="1" height="1" fill="#000000"/>
<rect x="307" y="775" width="1" height="1" fill="#000000"/>
<rect x="308" y="775" width="2" height="1" fill="#ffffff"/>
<rect x="310" y="775" width="1" height="1" fill="#000000"/>
<rect x="301" y="776" width="1" height="1" fill="#000000"/>
<rect x="302" y="776" width="3" height="1" fill="#ffffff"/>
<rect x="305" y="776" width="2" height="1" fill="#000000"/>
<rect x="307" y="776" width="3" height="1" fill="#ffffff"/>
<rect x="310" y="776" width="1" height="1" fill="#000000"/>
<rect x="302" y="777" width="1" height="1" fill="#000000"/>
<rect x="303" y="777" width="6" height="1" fill="#ffffff"/>
<rect x="309" y="777" width="1" height="1" fill="#000000"/>
<rect x="303" y="778" width="1" height="1" fill="#000000"/>
<rect x="304" y="778" width="4" height="1" fill="#ffffff"/>
<rect x="308" y="778" width="1" height="1" fill="#000000"/>
<rect x="303" y="779" width="1" height="1" fill="#000000"/>
<rect x="304" y="779" width="4" height="1" fill="#ffffff"/>
<rect x="308" y="779" width="1" height="1" fill="#000000"/>
<rect x="302" y="780" width="1" height="1" fill="#000000"/>
<rect x="303" y="780" width="6" height="1" fill="#ffffff"/>
<rect x="309" y="780" width="1" height="1" fill="#000000"/>
<rect x="301" y="781" width="1" height="1" fill="#000000"/>
<rect x="302" y="781" width="3" height="1" fill="#ffffff"/>
<rect x="305" y="781" width="2" height="1" fill="#000000"/>
<rect x="307" y="781" width="3" height="1" fill="#ffffff"/>
<rect x="310" y="781" width="1" height="1" fill="#000000"/>
<rect x="301" y="782" width="1" height="1" fill="#000000"/>
<rect x="302" y="782" width="2" height="1" fill="#ffffff"/>
<rect x="304" y="782" width="1" height="1" fill="#000000"/>
<rect x="307" y="782" width="1" height="1" fill="#000000"/>
<rect x="308" y="782" width="2" height="1" fill="#ffffff"/>
<rect x="310" y="782" width="1" height="1" fill="#000000"/>
<rect x="301" y="783" width="3" height="1" fill="#000000"/>
<rect x="308" y="783" width="3" height="1" fill="#000000"/>
<rect x="325.5" y="773.5" width="12" height="10" fill="#f4f6fa" stroke="#a8b4c8"/>
<rect x="326" y="776" width="11" height="1" fill="#a8b4c8"/>
<rect x="326" y="778" width="11" height="1" fill="#a8b4c8"/>
<rect x="326" y="780" width="11" height="1" fill="#a8b4c8"/>
<rect x="326" y="774" width="11" height="2" fill="#a8b4c8" opacity="0.6"/>
<path d="M424.5,773.5 L431,772.5 L431,785.5 L424.5,784.5 Z" fill="#f0f4f8" stroke="#9aa8b8"/>
<path d="M432,772.5 L439.5,771.5 L439.5,784.5 L432,785.5 Z" fill="#b8d4f0" stroke="#6a90c0"/>
<rect x="435" y="772" width="2" height="13" fill="#6a9ad0"/>
<rect x="920" y="779" width="1" height="5" fill="#d83a78"/>
<rect x="923" y="772" width="1" height="2" fill="#d83a78"/>
<rect x="923" y="776" width="1" height="8" fill="#d83a78"/>
<rect x="926" y="773" width="1" height="3" fill="#d83a78"/>
<rect x="926" y="778" width="1" height="6" fill="#d83a78"/>
<rect x="929" y="772" width="1" height="7" fill="#d83a78"/>
<rect x="929" y="782" width="1" height="2" fill="#d83a78"/>
<rect x="932" y="776" width="1" height="5" fill="#d83a78"/>
<path d="M919.5,771.5 L933.5,785.5" stroke="#0a1a6a" stroke-width="1.6"/>
<rect x="941.5" y="766.5" width="24" height="24" rx="3.5" fill="url(#btng)" stroke="#b4b0ac"/>
<rect x="948" y="784" width="1" height="2" fill="#10d010"/>
<rect x="948" y="784" width="1" height="0" fill="#6060f0"/>
<rect x="948" y="782" width="1" height="2" fill="#d83a78"/>
<rect x="951" y="781" width="1" height="5" fill="#10d010"/>
<rect x="951" y="774" width="1" height="7" fill="#6060f0"/>
<rect x="951" y="773" width="1" height="1" fill="#d83a78"/>
<rect x="954" y="782" width="1" height="4" fill="#10d010"/>
<rect x="954" y="777" width="1" height="5" fill="#6060f0"/>
<rect x="954" y="775" width="1" height="2" fill="#d83a78"/>
<rect x="957" y="781" width="1" height="5" fill="#10d010"/>
<rect x="957" y="779" width="1" height="2" fill="#6060f0"/>
<rect x="957" y="773" width="1" height="6" fill="#d83a78"/>
<rect x="960" y="783" width="1" height="3" fill="#10d010"/>
<rect x="960" y="783" width="1" height="0" fill="#6060f0"/>
<rect x="960" y="779" width="1" height="4" fill="#d83a78"/>
<rect x="978.5" y="774.5" width="9" height="3" fill="#fff" stroke="#000" stroke-width="1"/>
<rect x="1006.5" y="774.5" width="9" height="9" fill="#fff" stroke="#000" stroke-width="1"/>
<rect x="1008" y="776" width="6" height="1" fill="#000"/>
<ellipse cx="454.8" cy="824.4" rx="3.6" ry="2.3" transform="rotate(-45 454.8 824.4)" fill="#f4d890" stroke="#c0900c" stroke-width="1.4"/>
<ellipse cx="458.4" cy="820.8" rx="3.6" ry="2.3" transform="rotate(-45 458.4 820.8)" fill="#f4d890" stroke="#c0900c" stroke-width="1.4"/>
<rect x="456" y="822" width="1.4" height="1.4" fill="#fff"/></svg></body></html>
